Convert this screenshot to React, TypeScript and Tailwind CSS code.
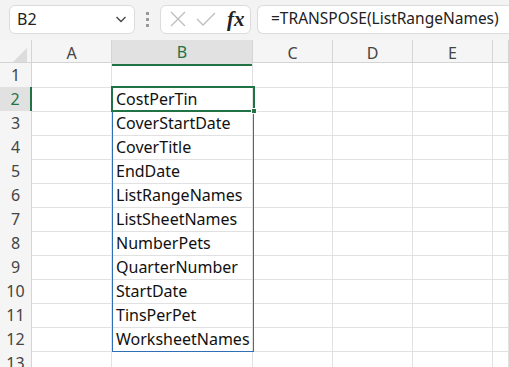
import React from 'react';

const cols = ['A', 'B', 'C', 'D', 'E', ''];
const names = [
  'CostPerTin',
  'CoverStartDate',
  'CoverTitle',
  'EndDate',
  'ListRangeNames',
  'ListSheetNames',
  'NumberPets',
  'QuarterNumber',
  'StartDate',
  'TinsPerPet',
  'WorksheetNames',
];

const font = { fontFamily: '"Noto Sans", "Open Sans", sans-serif' };

function Toolbar() {
  return (
    <div className="flex items-center h-[37px] bg-[#f3f3f3] pl-[9px] pt-[1px]">
      <div className="flex items-center justify-between w-[126px] h-[29px] bg-white border border-[#dcdcdc] rounded-md pl-[7px] pr-[5px]">
        <span className="text-[16px] text-[#222]">B2</span>
        <svg width="16" height="16" viewBox="0 0 16 16" className="text-[#444]">
          <path d="M3.5 6 L8 10.5 L12.5 6" fill="none" stroke="currentColor" strokeWidth="1.3" />
        </svg>
      </div>
      <div className="flex flex-col gap-[3px] mx-[11px]">
        <span className="w-[3px] h-[3px] bg-[#999]" />
        <span className="w-[3px] h-[3px] bg-[#999]" />
        <span className="w-[3px] h-[3px] bg-[#999]" />
      </div>
      <div className="flex items-center w-[91px] h-[29px] bg-white border border-[#dcdcdc] rounded-md pl-[8px]">
        <svg width="18" height="18" viewBox="0 0 18 18" className="text-[#bdbdbd]">
          <path d="M2 2 L16 16 M16 2 L2 16" fill="none" stroke="currentColor" strokeWidth="1.3" />
        </svg>
        <svg width="22" height="18" viewBox="0 0 22 18" className="text-[#bdbdbd] ml-[8px]">
          <path d="M2 9 L8 15 L20 3" fill="none" stroke="currentColor" strokeWidth="1.3" />
        </svg>
        <span
          className="ml-[10px] text-[21px] italic font-bold text-[#222] leading-none"
          style={{ fontFamily: '"Liberation Serif", "DejaVu Serif", serif' }}
        >
          fx
        </span>
      </div>
      <div className="flex items-center flex-1 h-[29px] bg-white border border-[#dcdcdc] rounded-l-md border-r-0 ml-[6px] pl-[13px]">
        <span className="text-[15.5px] text-[#222] whitespace-nowrap">=TRANSPOSE(ListRangeNames)</span>
      </div>
    </div>
  );
}

export default function App() {
  const rows = Array.from({ length: 13 }, (_, i) => i + 1);
  const template = 'grid grid-cols-[32px_80px_141px_80px_80px_80px_1fr]';

  return (
    <div className="w-[509px] h-[367px] overflow-hidden bg-white relative" style={font}>
      <Toolbar />
      <div className="h-[3px] bg-[#f3f3f3]" />
      {/* column headers */}
      <div className={`${template} h-[23px] bg-[#f5f5f5] border-b border-[#d4d4d4]`}>
        <div className="relative border-r border-[#d4d4d4]">
          <svg width="14" height="14" viewBox="0 0 14 14" className="absolute right-[4px] bottom-[4px]">
            <path d="M14 0 L14 14 L0 14 Z" fill="#dcdcdc" />
          </svg>
        </div>
        {cols.map((c) =>
          c === 'B' ? (
            <div
              key={c}
              className="flex items-center justify-center bg-[#e1e1e1] border-b-2 border-[#217346] text-[#217346] text-[16px] border-r border-r-[#d4d4d4]"
            >
              {c}
            </div>
          ) : (
            <div key={c || 'f'} className="flex items-center justify-center border-r border-[#d4d4d4] text-[16px] text-[#444]">
              {c}
            </div>
          )
        )}
      </div>
      {/* rows */}
      {rows.map((r) => (
        <div key={r} className={`${template} h-[24px]`}>
          <div
            className={`flex items-center justify-center text-[16px] border-b border-[#e1e1e1] ${
              r === 2
                ? 'bg-[#e1e1e1] text-[#217346] border-r-2 border-r-[#217346]'
                : 'bg-[#f5f5f5] text-[#444] border-r border-r-[#d4d4d4]'
            }`}
          >
            {r}
          </div>
          {cols.map((c) => (
            <div
              key={c || 'f'}
              className="flex items-center border-r border-b border-[#e1e1e1] pl-[4px] text-[16px] text-[#111] whitespace-nowrap overflow-visible"
            >
              {c === 'B' && r >= 2 && r <= 12 ? names[r - 2] : ''}
            </div>
          ))}
        </div>
      ))}
      {/* spill range border */}
      <div className="absolute left-[112px] top-[87px] w-[142px] h-[265px] border border-[#2f6fb5] pointer-events-none" />
      {/* active cell */}
      <div className="absolute left-[111px] top-[86px] w-[144px] h-[26px] border-2 border-[#217346] pointer-events-none" />
      <div className="absolute left-[251px] top-[108px] w-[6px] h-[6px] bg-[#217346] border border-white pointer-events-none" />
    </div>
  );
}
